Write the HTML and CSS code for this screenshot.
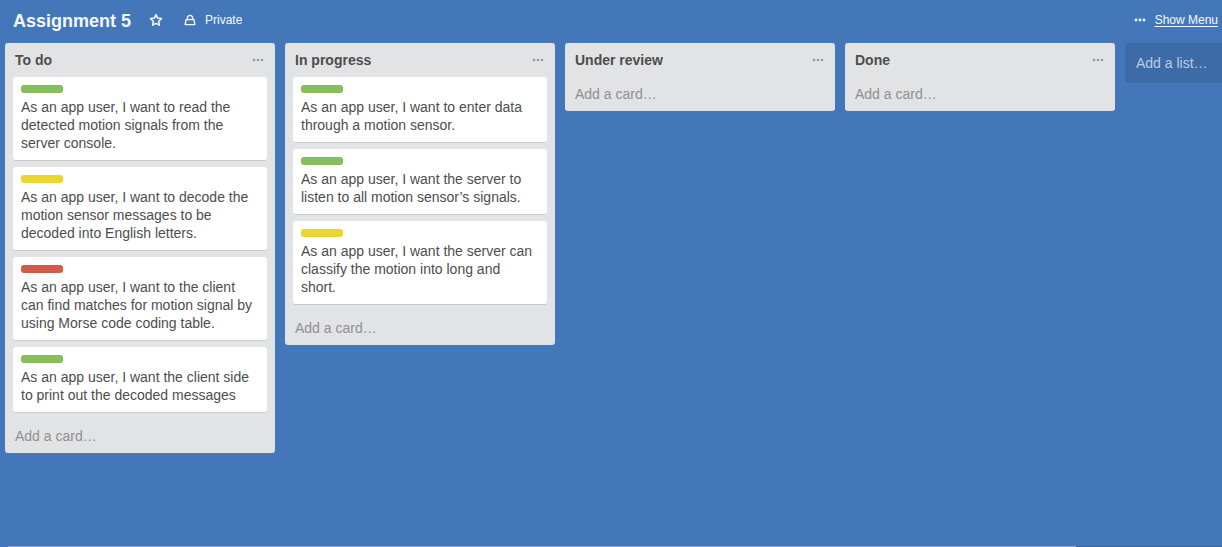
FILE: index.html
```html
<!DOCTYPE html>
<html lang="en">
<head>
<meta charset="utf-8">
<title>Assignment 5</title>
<link rel="stylesheet" href="styles.css">
</head>
<body>
<header class="board-header">
  <h1 class="board-title">Assignment 5</h1>
  <button class="header-btn star" aria-label="Star board">
    <svg width="14" height="14" viewBox="0 0 14 14" fill="none" stroke="currentColor" stroke-width="1.5" stroke-linejoin="round"><path d="M7 1.6 8.6 5.1 12.5 5.6 9.7 8.3 10.4 12.2 7 10.3 3.6 12.2 4.3 8.3 1.5 5.6 5.4 5.1Z"/></svg>
  </button>
  <button class="header-btn privacy">
    <svg width="12" height="12" viewBox="0 0 12 12" fill="none" stroke="currentColor" stroke-width="1.4" stroke-linejoin="round"><path d="M2 5.6H10L10.8 10.6H1.2ZM3.4 5.4V4.2a2.6 2.8 0 0 1 5.2 0V5.4"/></svg>
    <span>Private</span>
  </button>
  <button class="header-btn menu">
    <svg width="12" height="4" viewBox="0 0 12 4" fill="currentColor"><circle cx="2" cy="2" r="1.4"/><circle cx="6" cy="2" r="1.4"/><circle cx="10" cy="2" r="1.4"/></svg>
    <span class="menu-text">Show Menu</span>
  </button>
</header>
<main class="board">
  <section class="list">
    <div class="list-header"><h2 class="list-title">To do</h2><button class="list-menu" aria-label="List actions"><svg width="12" height="4" viewBox="0 0 12 4" fill="currentColor"><circle cx="2" cy="2" r="1.3"/><circle cx="6" cy="2" r="1.3"/><circle cx="10" cy="2" r="1.3"/></svg></button></div>
    <article class="card"><span class="label green"></span><p class="card-text">As an app user, I want to read the detected motion signals from the server console.</p></article>
    <article class="card"><span class="label yellow"></span><p class="card-text">As an app user, I want to decode the motion sensor messages to be decoded into English letters.</p></article>
    <article class="card"><span class="label red"></span><p class="card-text">As an app user, I want to the client can find matches for motion signal by using Morse code coding table.</p></article>
    <article class="card"><span class="label green"></span><p class="card-text">As an app user, I want the client side to print out the decoded messages</p></article>
    <button class="add-card">Add a card…</button>
  </section>
  <section class="list">
    <div class="list-header"><h2 class="list-title">In progress</h2><button class="list-menu" aria-label="List actions"><svg width="12" height="4" viewBox="0 0 12 4" fill="currentColor"><circle cx="2" cy="2" r="1.3"/><circle cx="6" cy="2" r="1.3"/><circle cx="10" cy="2" r="1.3"/></svg></button></div>
    <article class="card"><span class="label green"></span><p class="card-text">As an app user, I want to enter data through a motion sensor.</p></article>
    <article class="card"><span class="label green"></span><p class="card-text">As an app user, I want the server to listen to all motion sensor’s signals.</p></article>
    <article class="card"><span class="label yellow"></span><p class="card-text">As an app user, I want the server can classify the motion into long and short.</p></article>
    <button class="add-card">Add a card…</button>
  </section>
  <section class="list">
    <div class="list-header"><h2 class="list-title">Under review</h2><button class="list-menu" aria-label="List actions"><svg width="12" height="4" viewBox="0 0 12 4" fill="currentColor"><circle cx="2" cy="2" r="1.3"/><circle cx="6" cy="2" r="1.3"/><circle cx="10" cy="2" r="1.3"/></svg></button></div>
    <button class="add-card">Add a card…</button>
  </section>
  <section class="list">
    <div class="list-header"><h2 class="list-title">Done</h2><button class="list-menu" aria-label="List actions"><svg width="12" height="4" viewBox="0 0 12 4" fill="currentColor"><circle cx="2" cy="2" r="1.3"/><circle cx="6" cy="2" r="1.3"/><circle cx="10" cy="2" r="1.3"/></svg></button></div>
    <button class="add-card">Add a card…</button>
  </section>
  <button class="add-list">Add a list…</button>
</main>
<div class="scroll-track"><div class="scroll-thumb"></div></div>
</body>
</html>
```
FILE: styles.css
```css
* {
  box-sizing: border-box;
}

body {
  margin: 0;
  min-height: 100vh;
  display: flex;
  flex-direction: column;
  overflow-x: hidden;
  background: #4477b9;
  color: #4d4d4d;
  font: 14px/18px "Liberation Sans", Arial, sans-serif;
}

h1, h2, p {
  margin: 0;
}

button {
  border: 0;
  padding: 0;
  background: none;
  font: inherit;
  text-align: left;
  cursor: pointer;
}

svg {
  display: block;
  flex: none;
}

.board-header {
  display: flex;
  align-items: center;
  padding: 9px 4px 10px 13px;
  color: #f5f7fa;
}

.board-title {
  font-size: 18px;
  line-height: 24px;
}

.header-btn {
  display: flex;
  align-items: center;
  margin-bottom: 2px;
  color: inherit;
  font-size: 12px;
}

.star {
  margin-left: 18px;
}

.privacy {
  margin-left: 21px;
  gap: 9px;
}

.menu {
  margin-left: auto;
  gap: 9px;
}

.menu-text {
  text-decoration: underline;
  text-underline-offset: 2px;
}

.board {
  flex: 1;
  display: flex;
  align-items: flex-start;
  gap: 10px;
  padding-left: 5px;
  overflow: hidden;
}

.list {
  flex: none;
  width: 270px;
  padding: 0 8px;
  border-radius: 3px;
  background: #e2e3e5;
}

.list-header {
  display: flex;
  justify-content: space-between;
  align-items: center;
  padding: 8px 3px 8px 2px;
}

.list-title {
  font-size: 14px;
  line-height: 18px;
}

.list-menu {
  color: #999;
}

.card {
  margin-bottom: 6px;
  padding: 8px;
  border-radius: 3px;
  background: #fff;
  border-bottom: 1px solid #c8c9cb;
}

.label {
  display: block;
  width: 42px;
  height: 8px;
  margin-bottom: 5px;
  border-radius: 3px;
}

.green {
  background: #85be5b;
}

.yellow {
  background: #ebd533;
}

.red {
  background: #cf5b49;
}

.add-card {
  display: block;
  width: 100%;
  padding: 8px 2px;
  color: #8f9091;
}

.add-list {
  flex: none;
  width: 270px;
  padding: 11px;
  border-radius: 3px;
  background: #3d6ba7;
  color: #bccce2;
}

.scroll-track {
  height: 1px;
  margin-left: 8px;
  background: #3864a0;
}

.scroll-thumb {
  width: 88%;
  height: 1px;
  background: #8eabd2;
}
```
